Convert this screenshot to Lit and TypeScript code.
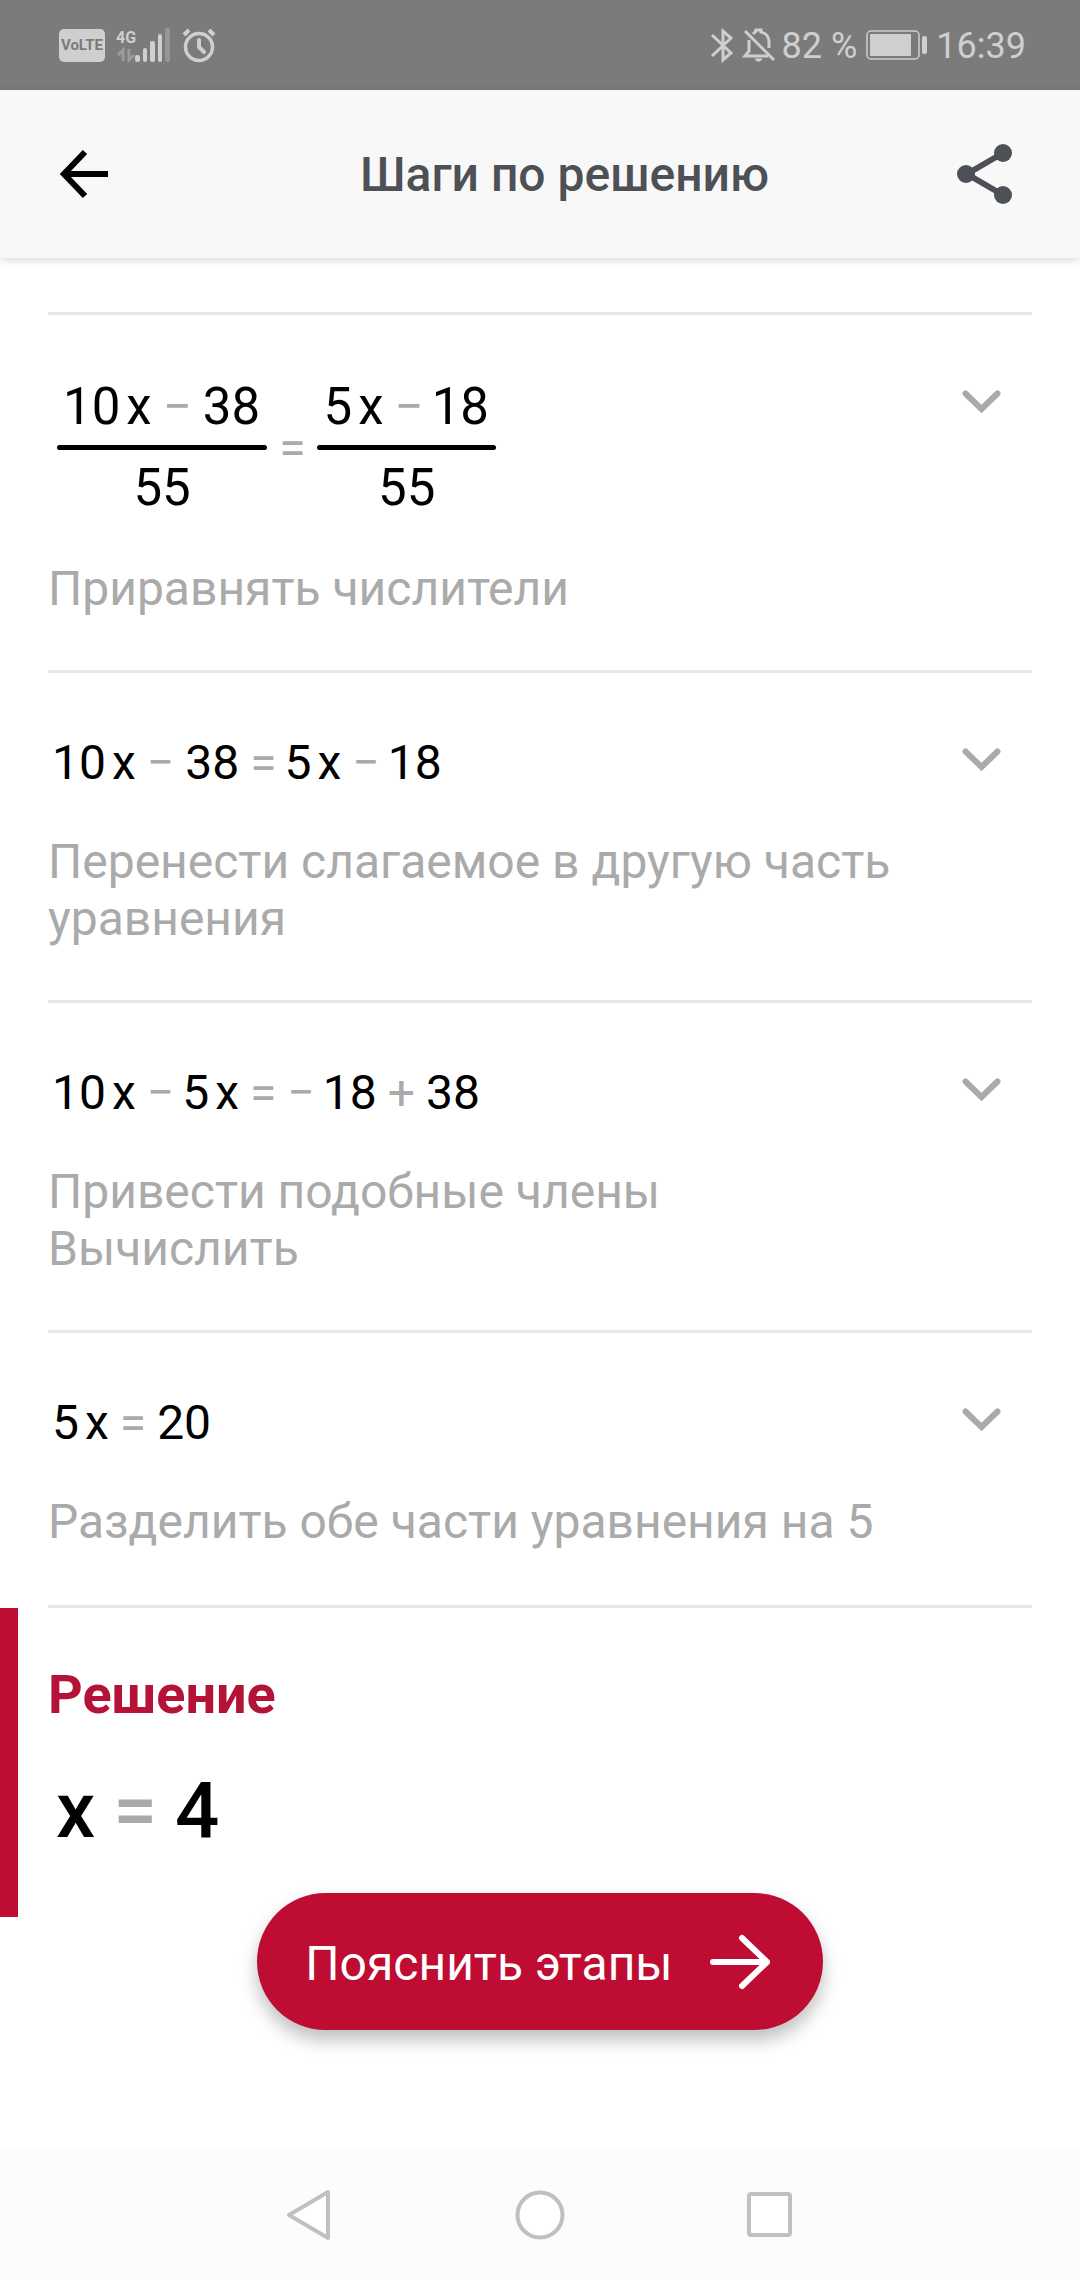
import { LitElement, html, css, svg, nothing, TemplateResult } from "lit";
import { customElement, property, state } from "lit/decorators.js";

type Token = string;
type Part = Token[] | { over: Token[]; under: Token[] };

interface Step {
  parts: Part[];
  notes: string[];
}

const STEPS: Step[] = [
  {
    parts: [
      { over: ["10", "x", "−", "38"], under: ["55"] },
      ["="],
      { over: ["5", "x", "−", "18"], under: ["55"] },
    ],
    notes: ["Приравнять числители"],
  },
  {
    parts: [["10", "x", "−", "38", "=", "5", "x", "−", "18"]],
    notes: ["Перенести слагаемое в другую часть уравнения"],
  },
  {
    parts: [["10", "x", "−", "5", "x", "=", "−", "18", "+", "38"]],
    notes: ["Привести подобные члены", "Вычислить"],
  },
  {
    parts: [["5", "x", "=", "20"]],
    notes: ["Разделить обе части уравнения на 5"],
  },
];

const isOperator = (t: Token) => t === "−" || t === "+" || t === "=";

// Digits with a wide left bearing sit closer to the operator before them.
const isSnug = (t: Token) => /^[15]/.test(t);

@customElement("math-line")
export class MathLine extends LitElement {
  @property({ attribute: false }) parts: Part[] = [];

  static styles = css`
    :host {
      display: flex;
      align-items: center;
      gap: 12px;
      color: #000;
      font-size: 48px;
      line-height: 57px;
    }
    .run {
      display: flex;
      justify-content: center;
      gap: 11px;
    }
    .term {
      display: flex;
      gap: 6px;
    }
    .op {
      color: #aaa;
    }
    .op + .snug {
      margin-left: -3px;
    }
    .fraction {
      display: flex;
      flex-direction: column;
      gap: 8px;
      font-size: 51px;
      line-height: 60px;
    }
    .over {
      padding: 1px 7px 0 6px;
    }
    .bar {
      height: 5px;
      border-radius: 3px;
      background: #000;
    }
  `;

  private run(tokens: Token[]): TemplateResult {
    const groups: Token[][] = [];
    for (const t of tokens) {
      const last = groups[groups.length - 1];
      if (t === "x" && last && !isOperator(last[0])) last.push(t);
      else groups.push([t]);
    }
    return html`<span class="run"
      >${groups.map((g) =>
        isOperator(g[0])
          ? html`<span class="op">${g[0]}</span>`
          : html`<span class="term ${isSnug(g[0]) ? "snug" : ""}">${g.map((t) => html`<span>${t}</span>`)}</span>`
      )}</span
    >`;
  }

  render() {
    return this.parts.map((p) =>
      Array.isArray(p)
        ? this.run(p)
        : html`<span class="fraction">
            <span class="over">${this.run(p.over)}</span>
            <span class="bar"></span>
            <span>${this.run(p.under)}</span>
          </span>`
    );
  }
}

@customElement("status-bar")
export class StatusBar extends LitElement {
  static styles = css`
    :host {
      display: flex;
      align-items: center;
      justify-content: space-between;
      height: 90px;
      box-sizing: border-box;
      padding: 0 54px 0 59px;
      background: #7b7b7b;
      color: #cfcfcf;
      font-size: 36px;
    }
    .group {
      display: flex;
      align-items: center;
      gap: 12px;
    }
    .volte {
      width: 46px;
      height: 33px;
      border-radius: 5px;
      background: #cfcfcf;
      color: #7b7b7b;
      font-size: 15px;
      font-weight: 700;
      line-height: 33px;
      text-align: center;
    }
    .right {
      gap: 9px;
    }
    .tight {
      display: flex;
      align-items: center;
      gap: 7px;
    }
    .label {
      padding-top: 2px;
    }
    svg {
      display: block;
      overflow: visible;
    }
    .net {
      display: flex;
      align-items: flex-end;
    }
    .net-type {
      display: flex;
      flex-direction: column;
      align-items: center;
      width: 18px;
      font-size: 16px;
      font-weight: 700;
      line-height: 20px;
    }
  `;

  render() {
    return html`
      <div class="group">
        <span class="volte">VoLTE</span>
        <div class="net">
          <span class="net-type">
            <span>4G</span>
            <svg width="16" height="14" viewBox="0 0 16 14" fill="none" stroke="#9b9b9b" stroke-width="3" aria-hidden="true">
              <path d="M0 7 L5 2 V13 M16 7 L11 12 V1" />
            </svg>
          </span>
          <svg width="35" height="34" viewBox="0 0 35 34" fill="#cfcfcf" aria-hidden="true">
            <rect x="0" y="27" width="5" height="7" rx="2" />
            <rect x="8" y="20" width="4" height="14" rx="2" />
            <rect x="15" y="13" width="5" height="21" rx="2" />
            <rect x="23" y="6" width="4" height="28" rx="2" />
            <rect x="30" y="0" width="5" height="34" rx="2" fill="#969696" />
          </svg>
        </div>
        <svg width="34" height="34" viewBox="0 0 34 34" fill="none" stroke="#cfcfcf" stroke-linecap="round" stroke-linejoin="round" aria-hidden="true">
          <circle cx="17" cy="19" r="13.5" stroke-width="3.5" />
          <path d="M17 12 V19 L22 24" stroke-width="4" />
          <path d="M2 7 L7 2 M27 2 L32 7" stroke-width="4" stroke-linecap="butt" />
        </svg>
      </div>
      <div class="group right">
        <svg width="23" height="35" viewBox="0 0 23 35" fill="none" stroke="#cfcfcf" stroke-width="3" stroke-linejoin="miter" aria-hidden="true">
          <path d="M1 7 L20 25 L12 32 V3 L20 10 L1 28" />
        </svg>
        <div class="tight">
          <svg width="32" height="35" viewBox="0 0 32 35" fill="none" stroke="#cfcfcf" stroke-width="3" aria-hidden="true">
            <path d="M2 3 L31 32" />
            <path d="M6 12 V23 L2 28 H25" />
            <path d="M10 6 C12 4 13 4 13 2 H18 V4 C23 5 26 9 26 14 V20" />
            <path d="M12 31 H19 L17 33 H14 Z" fill="#cfcfcf" stroke-width="1" />
          </svg>
          <span class="label">82 %</span>
        </div>
        <svg width="61" height="30" viewBox="0 0 61 30" aria-hidden="true">
          <rect x="1" y="1" width="52" height="28" rx="4" fill="none" stroke="#cfcfcf" stroke-width="1.5" />
          <rect x="4" y="4" width="41" height="22" rx="1" fill="#cfcfcf" />
          <rect x="56" y="6" width="5" height="18" rx="2" fill="#cfcfcf" />
        </svg>
        <span class="label">16:39</span>
      </div>
    `;
  }
}

@customElement("app-root")
export class AppRoot extends LitElement {
  @state() private open = -1;

  static styles = css`
    :host {
      display: flex;
      flex-direction: column;
      min-height: 100vh;
      background: #fff;
      font-family: Roboto, "Liberation Sans", sans-serif;
    }
    button {
      margin: 0;
      padding: 0;
      border: 0;
      background: none;
      font: inherit;
      cursor: pointer;
    }
    svg {
      display: block;
    }
    .header {
      display: flex;
      align-items: center;
      height: 168px;
      box-sizing: border-box;
      padding: 0 65px 0 60px;
      background: #f8f8f8;
      box-shadow: 0 2px 8px rgba(0, 0, 0, 0.16);
      z-index: 1;
    }
    .title {
      flex: 1;
      margin: 0;
      padding-left: 62px;
      color: #4d5054;
      font-size: 48px;
      line-height: 57px;
      font-weight: 500;
      text-align: center;
    }
    .main {
      position: relative;
      flex: 1;
      padding-top: 54px;
    }
    .steps {
      margin: 0 48px;
      padding: 0 0 2px;
      list-style: none;
      border-bottom: 3px solid #e7e7e7;
    }
    .step {
      display: flex;
      justify-content: space-between;
      align-items: flex-start;
      border-top: 3px solid #e7e7e7;
      padding: 61px 31px 53px 0;
    }
    .body {
      display: flex;
      flex-direction: column;
      gap: 42px;
    }
    .math {
      padding-left: 4px;
    }
    .math.tall {
      padding-left: 9px;
    }
    .note {
      margin: 0;
      color: #aaa;
      font-size: 48px;
      line-height: 57px;
    }
    .toggle {
      padding: 14px 0;
    }
    .solution {
      border-left: 18px solid #be0c32;
      padding: 55px 30px 60px;
      display: flex;
      flex-direction: column;
      gap: 38px;
    }
    .solution-title {
      margin: 0;
      color: #b51237;
      font-size: 54px;
      line-height: 64px;
      font-weight: 700;
    }
    .answer {
      display: flex;
      gap: 18px;
      padding-left: 8px;
      font-size: 78px;
      line-height: 92px;
      font-weight: 500;
    }
    .op {
      color: #aaa;
    }
    .explain-layer {
      position: absolute;
      left: 0;
      right: 0;
      bottom: 120px;
      display: flex;
      justify-content: center;
    }
    .explain {
      display: flex;
      align-items: center;
      gap: 36px;
      height: 137px;
      padding: 0 52px 0 48px;
      border-radius: 69px;
      background: #be0c32;
      box-shadow: 0 10px 18px rgba(0, 0, 0, 0.26);
      color: #fff;
      font-size: 48px;
      line-height: 57px;
    }
    .explain-text {
      padding-top: 4px;
    }
    .nav {
      display: flex;
      align-items: center;
      justify-content: center;
      gap: 180px;
      height: 130px;
      background: #fcfcfc;
    }
  `;

  private chevron() {
    return svg`<svg width="39" height="24" viewBox="0 0 39 24" fill="none" stroke="#aaa" stroke-width="6" stroke-linecap="round" aria-hidden="true"><path d="M3.5 3.5 L19.5 19 L35.5 3.5" /></svg>`;
  }

  render() {
    return html`
      <status-bar></status-bar>
      <header class="header">
        <button aria-label="Назад">
          <svg width="50" height="50" viewBox="0 0 50 50" fill="none" stroke="#000" stroke-width="6" aria-hidden="true">
            <path d="M48 25 H5 M25 3 L4 25 L25 47" />
          </svg>
        </button>
        <h1 class="title">Шаги по решению</h1>
        <button aria-label="Поделиться">
          <svg width="58" height="60" viewBox="0 0 58 60" fill="#4d5054" stroke="#4d5054" aria-hidden="true">
            <path d="M46 9 L10 30 L46 51" fill="none" stroke-width="6" />
            <circle cx="9" cy="30" r="9" stroke="none" />
            <circle cx="46" cy="9" r="9" stroke="none" />
            <circle cx="46" cy="51" r="9" stroke="none" />
          </svg>
        </button>
      </header>
      <main class="main">
        <ol class="steps">
          ${STEPS.map(
            (s, i) => html`<li class="step">
              <div class="body">
                <math-line class="math ${s.parts.length > 1 ? "tall" : ""}" .parts=${s.parts}></math-line>
                <p class="note">${s.notes.map((n, k) => html`${k ? html`<br />` : nothing}${n}`)}</p>
              </div>
              <button
                class="toggle"
                aria-label="Подробнее"
                aria-expanded=${this.open === i ? "true" : "false"}
                @click=${() => (this.open = this.open === i ? -1 : i)}
              >
                ${this.chevron()}
              </button>
            </li>`
          )}
        </ol>
        <section class="solution">
          <h2 class="solution-title">Решение</h2>
          <div class="answer"><span>x</span><span class="op">=</span><span>4</span></div>
        </section>
        <div class="explain-layer">
          <button class="explain">
            <span class="explain-text">Пояснить этапы</span>
            <svg width="62" height="56" viewBox="0 0 62 56" fill="none" stroke="#fff" stroke-width="6" stroke-linecap="round" stroke-linejoin="round" aria-hidden="true">
              <path d="M4 28 H58 M33 4 L58 28 L33 52" />
            </svg>
          </button>
        </div>
      </main>
      <nav class="nav">
        <button aria-label="Назад">
          <svg width="50" height="52" viewBox="0 0 50 52" fill="#fff" stroke="#c0c0c0" stroke-width="4" stroke-linejoin="round" aria-hidden="true">
            <path d="M43 3 L4 26 L43 49 Z" />
          </svg>
        </button>
        <button aria-label="Домой">
          <svg width="50" height="52" viewBox="0 0 50 52" fill="#fff" stroke="#c0c0c0" stroke-width="4" aria-hidden="true">
            <circle cx="25" cy="26" r="22.5" />
          </svg>
        </button>
        <button aria-label="Недавние">
          <svg width="50" height="52" viewBox="0 0 50 52" fill="#fff" stroke="#c0c0c0" stroke-width="4" aria-hidden="true">
            <rect x="4" y="5" width="41" height="41" rx="2" />
          </svg>
        </button>
      </nav>
    `;
  }
}
